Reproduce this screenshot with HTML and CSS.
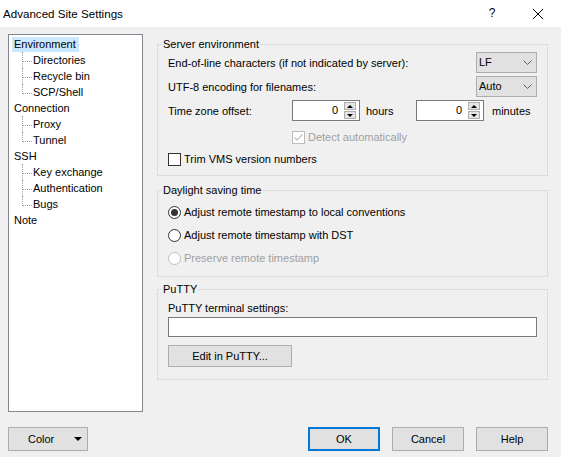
FILE: index.html
```html
<!DOCTYPE html>
<html>
<head>
<meta charset="utf-8">
<title>Advanced Site Settings</title>
<link rel="stylesheet" href="styles.css">
</head>
<body>
<div class="titlebar">
  <span class="title">Advanced Site Settings</span>
  <span class="tb-btn tb-help">?</span>
  <span class="tb-btn tb-close"><svg width="10" height="10" viewBox="0 0 10 10"><path d="M0 0L10 10M10 0L0 10" stroke="#000" stroke-width="1" fill="none"/></svg></span>
</div>
<div class="main">
  <div class="tree">
    <div class="node"><span class="lbl sel">Environment</span></div>
    <div class="kids">
      <div class="kid">Directories</div>
      <div class="kid">Recycle bin</div>
      <div class="kid last">SCP/Shell</div>
    </div>
    <div class="node"><span class="lbl">Connection</span></div>
    <div class="kids">
      <div class="kid">Proxy</div>
      <div class="kid last">Tunnel</div>
    </div>
    <div class="node"><span class="lbl">SSH</span></div>
    <div class="kids">
      <div class="kid">Key exchange</div>
      <div class="kid">Authentication</div>
      <div class="kid last">Bugs</div>
    </div>
    <div class="node"><span class="lbl">Note</span></div>
  </div>
  <div class="panel">
    <fieldset class="group g1">
      <legend>Server environment</legend>
      <div class="row">
        <span class="label">End-of-line characters (if not indicated by server):</span>
        <div class="combo"><span>LF</span><svg width="9" height="5" viewBox="0 0 9 5"><polyline points="0.5,0.5 4.5,4.5 8.5,0.5" fill="none" stroke="#606060" stroke-width="1"/></svg></div>
      </div>
      <div class="row gap3">
        <span class="label">UTF-8 encoding for filenames:</span>
        <div class="combo"><span>Auto</span><svg width="9" height="5" viewBox="0 0 9 5"><polyline points="0.5,0.5 4.5,4.5 8.5,0.5" fill="none" stroke="#606060" stroke-width="1"/></svg></div>
      </div>
      <div class="row gap3 tz">
        <span class="label tz-label">Time zone offset:</span>
        <div class="spin"><span class="val">0</span><span class="spinbtns"><span class="sb up"></span><span class="sb down"></span></span></div>
        <span class="label unit-h">hours</span>
        <div class="spin"><span class="val">0</span><span class="spinbtns"><span class="sb up"></span><span class="sb down"></span></span></div>
        <span class="label unit-m">minutes</span>
      </div>
      <div class="check-row detect disabled">
        <span class="cb cb-dis"><svg width="11" height="11" viewBox="0 0 11 11"><polyline points="1.5,5.5 4,8 9.5,2.5" fill="none" stroke="#bcbcbc" stroke-width="1.2"/></svg></span>
        <span class="cb-text">Detect automatically</span>
      </div>
      <div class="check-row trim">
        <span class="cb"></span>
        <span class="cb-text">Trim VMS version numbers</span>
      </div>
    </fieldset>

    <fieldset class="group g2">
      <legend>Daylight saving time</legend>
      <div class="radio-row"><span class="rb on"></span><span class="cb-text">Adjust remote timestamp to local conventions</span></div>
      <div class="radio-row"><span class="rb"></span><span class="cb-text">Adjust remote timestamp with DST</span></div>
      <div class="radio-row disabled"><span class="rb rb-dis"></span><span class="cb-text">Preserve remote timestamp</span></div>
    </fieldset>

    <fieldset class="group g3">
      <legend>PuTTY</legend>
      <div class="plabel">PuTTY terminal settings:</div>
      <div class="textbox"></div>
      <div class="btn edit-btn">Edit in PuTTY...</div>
    </fieldset>
  </div>
</div>
<div class="footer">
  <div class="btn color-btn"><span>Color</span><span class="tri"></span></div>
  <div class="btn-group">
    <div class="btn default">OK</div>
    <div class="btn">Cancel</div>
    <div class="btn">Help</div>
  </div>
</div>
</body>
</html>
```

FILE: styles.css
```css
* { box-sizing: border-box; }
html, body { margin: 0; padding: 0; }
body {
  width: 561px;
  height: 457px;
  overflow: hidden;
  background: #f0f0f0;
  font-family: "Liberation Sans", Arial, sans-serif;
  font-size: 11px;
  line-height: 15px;
  color: #000;
}

/* title bar */
.titlebar {
  height: 27px;
  background: #fff;
  display: flex;
  align-items: center;
}
.title {
  flex: 1;
  padding-left: 3px;
  font-size: 11.6px;
}
.tb-btn {
  width: 46px;
  height: 27px;
  display: flex;
  align-items: center;
  justify-content: center;
}
.tb-help { font-size: 12px; }

/* main area */
.main {
  display: flex;
  align-items: flex-start;
  height: 385px;
  padding-left: 8px;
}

/* tree */
.tree {
  margin-top: 7px;
  width: 135px;
  height: 378px;
  border: 1px solid #828790;
  background: #fff;
  padding-top: 1px;
}
.node {
  height: 16px;
  padding-left: 3px;
  display: flex;
  align-items: center;
}
.lbl {
  display: inline-block;
  height: 15px;
  line-height: 15px;
  padding: 0 3px 0 2px;
}
.lbl.sel { background: #cce8ff; }
.kid {
  position: relative;
  height: 16px;
  line-height: 16px;
  padding-left: 24px;
}
.kid::before {
  content: "";
  position: absolute;
  left: 13px;
  top: 0;
  width: 9px;
  height: 9px;
  border-left: 1px dotted #a0a0a0;
  border-bottom: 1px dotted #a0a0a0;
}
.kid::after {
  content: "";
  position: absolute;
  left: 13px;
  top: 9px;
  bottom: 0;
  border-left: 1px dotted #a0a0a0;
}
.kid.last::after { display: none; }

/* right panel */
.panel {
  width: 391px;
  margin-left: 14px;
}
.group {
  margin: 0;
  border: 1px solid #dcdcdc;
  padding: 0 10px 8px 10px;
  min-width: 0;
}
.group legend {
  padding: 0 1px;
  margin-left: -6px;
  line-height: 15px;
  height: 15px;
}
.g1 { margin-top: 10px; }
.g2 { margin-top: 7px; padding-top: 3px; padding-bottom: 6px; }
.g3 { margin-top: 5px; padding-top: 4px; padding-bottom: 12px; }

.row {
  display: flex;
  align-items: center;
  justify-content: space-between;
  height: 21px;
}
.row .label { padding-top: 2px; }
.gap3 { margin-top: 3px; }
.tz { justify-content: flex-start; }
.tz-label { width: 124px; }
.unit-h { width: 50px; margin-left: 6px; }
.unit-m { margin-left: 8px; }

.combo {
  width: 61px;
  height: 21px;
  border: 1px solid #adadad;
  background: #e1e1e1;
  display: flex;
  align-items: center;
  justify-content: space-between;
  padding: 0 4px 0 2px;
}
.combo svg { display: block; }

.spin {
  width: 68px;
  height: 21px;
  border: 1px solid #7a7a7a;
  background: #fff;
  display: flex;
  align-items: center;
}
.spin .val {
  flex: 1;
  text-align: right;
  padding-right: 6px;
}
.spinbtns {
  width: 12px;
  height: 17px;
  margin-right: 3px;
  display: flex;
  flex-direction: column;
  gap: 1px;
}
.sb {
  flex: 1;
  background: #e5e5e5;
  border: 1px solid #adadad;
  display: flex;
  align-items: center;
  justify-content: center;
}
.sb::before {
  content: "";
  width: 0;
  height: 0;
  border-left: 3px solid transparent;
  border-right: 3px solid transparent;
}
.sb.up::before { border-bottom: 3px solid #000; }
.sb.down::before { border-top: 3px solid #000; }

.check-row {
  display: flex;
  align-items: center;
  height: 15px;
}
.detect { margin-top: 9px; padding-left: 124px; }
.trim { margin-top: 7px; }
.cb {
  width: 13px;
  height: 13px;
  border: 1px solid #333;
  background: #fff;
  display: flex;
  align-items: center;
  justify-content: center;
}
.cb-dis { border-color: #bcbcbc; }
.cb-text { margin-left: 3px; }
.disabled .cb-text { color: #a0a0a0; }

.radio-row {
  display: flex;
  align-items: center;
  height: 23px;
}
.rb {
  width: 13px;
  height: 13px;
  border: 1px solid #333;
  border-radius: 50%;
  background: #fff;
  display: flex;
  align-items: center;
  justify-content: center;
}
.rb.on::before {
  content: "";
  width: 7px;
  height: 7px;
  border-radius: 50%;
  background: #333;
}
.rb-dis { border-color: #bcbcbc; }

.plabel { height: 15px; }
.textbox {
  margin-top: 1px;
  height: 20px;
  border: 1px solid #7a7a7a;
  background: #fff;
}
.btn {
  height: 23px;
  border: 1px solid #adadad;
  background: #e1e1e1;
  display: flex;
  align-items: center;
  justify-content: center;
}
.edit-btn {
  margin-top: 8px;
  width: 124px;
  height: 22px;
}

/* footer */
.footer {
  display: flex;
  justify-content: space-between;
  margin-top: 15px;
  padding: 0 13px 0 8px;
}
.footer .btn { width: 72px; height: 24px; }
.footer .color-btn {
  width: 80px;
  justify-content: flex-start;
  padding: 0 5px 0 19px;
}
.tri {
  margin-left: auto;
  width: 0;
  height: 0;
  border-left: 4px solid transparent;
  border-right: 4px solid transparent;
  border-top: 4px solid #000;
}
.btn-group { display: flex; gap: 12px; }
.btn.default { border: 2px solid #0078d7; }
```
